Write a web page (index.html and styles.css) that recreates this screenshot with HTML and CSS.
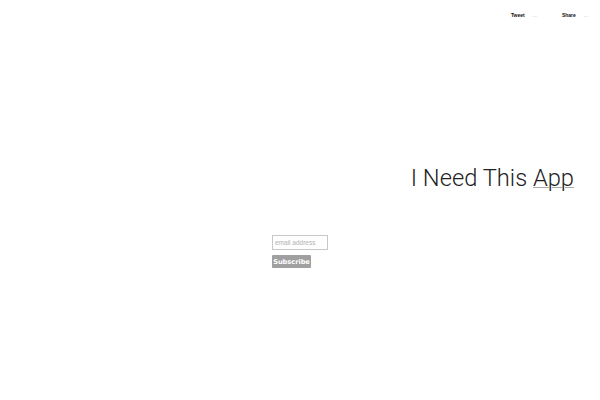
FILE: index.html
```html
<!DOCTYPE html>
<html>
<head>
<meta charset="utf-8">
<link rel="stylesheet" href="styles.css">
</head>
<body>
<div class="page">
  <div class="social">
    <div class="share-item"><span class="label">Tweet</span><span class="count">...</span></div>
    <div class="share-item"><span class="label">Share</span><span class="count">...</span></div>
  </div>
  <h1 class="title">I Need This <a class="app-link" href="#">App</a></h1>
  <form class="signup">
    <input class="email" type="text" placeholder="email address">
    <button class="subscribe" type="button">Subscribe</button>
  </form>
</div>
</body>
</html>
```
FILE: styles.css
```css
html, body {
  margin: 0;
  padding: 0;
  background: #ffffff;
}
.page {
  width: 600px;
  height: 400px;
  display: flex;
  flex-direction: column;
  font-family: Roboto, "Liberation Sans", sans-serif;
}
.social {
  display: flex;
  justify-content: flex-end;
  gap: 25px;
  padding: 12px 12px 0 0;
  height: 9px;
}
.share-item {
  display: flex;
  align-items: baseline;
  gap: 8px;
}
.label {
  font-family: "Liberation Sans", Arial, sans-serif;
  font-size: 5px;
  font-weight: bold;
  color: #111;
}
.count {
  font-family: "Liberation Sans", Arial, sans-serif;
  font-size: 5px;
  color: #aaa;
}
.title {
  margin: 143px 26px 0 0;
  text-align: right;
  font-family: Roboto, sans-serif;
  font-weight: 300;
  font-size: 23.7px;
  line-height: 28px;
  color: #222;
}
.app-link {
  color: #222;
  text-decoration: underline;
  text-decoration-color: #aaa;
  text-decoration-thickness: 1px;
}
.signup {
  margin: 43px auto 0;
  width: 56px;
  display: flex;
  flex-direction: column;
  align-items: flex-start;
  gap: 5px;
}
.email {
  box-sizing: border-box;
  width: 56px;
  height: 15px;
  border: 1px solid #c8c8c8;
  padding: 0 2px;
  font-family: "Liberation Sans", Arial, sans-serif;
  font-size: 6.5px;
  outline: none;
}
.email::placeholder {
  color: #b0b0b0;
}
.subscribe {
  height: 13px;
  width: 39px;
  padding: 0;
  border: none;
  border-radius: 1px;
  background: #a0a0a0;
  color: #fff;
  font-family: "DejaVu Sans", sans-serif;
  font-weight: bold;
  font-size: 6.6px;
}
```
